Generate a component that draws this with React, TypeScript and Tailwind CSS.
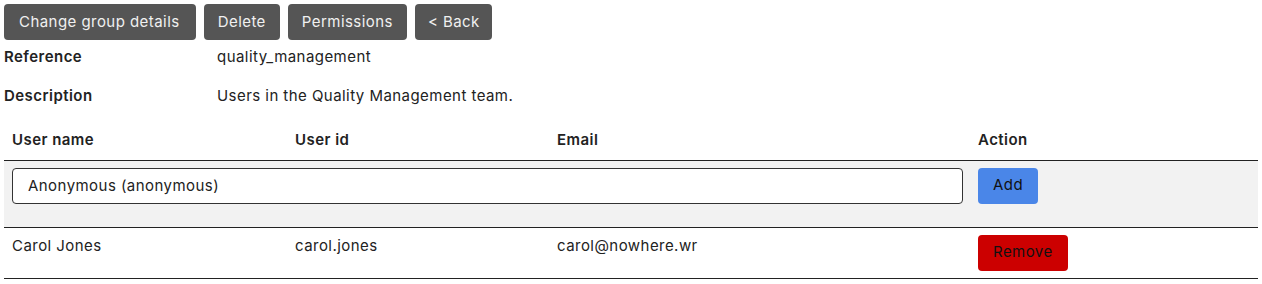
import React from "react";

const font = { fontFamily: "Inter, 'Noto Sans', sans-serif" };

export default function App() {
  return (
    <div className="px-[4px] pt-[4px] text-[15px] tracking-[0.45px] text-[#222]" style={font}>
      <div className="flex gap-[8px]">
        <button className="h-[36px] pl-[15px] pr-[16px] rounded-[4px] bg-[#555555] text-[#f0f0f0]">Change group details</button>
        <button className="h-[36px] px-[14px] rounded-[4px] bg-[#555555] text-[#f0f0f0]">Delete</button>
        <button className="h-[36px] px-[14px] rounded-[4px] bg-[#555555] text-[#f0f0f0]">Permissions</button>
        <button className="h-[36px] pl-[13px] pr-[12px] rounded-[4px] bg-[#555555] text-[#f0f0f0]">&lt; Back</button>
      </div>
      <div className="grid grid-cols-[213px_1fr] gap-y-[5px]">
        <div className="h-[34px] flex items-center font-semibold">Reference</div>
        <div className="h-[34px] flex items-center">quality_management</div>
        <div className="h-[34px] flex items-center font-semibold">Description</div>
        <div className="h-[34px] flex items-center">Users in the Quality Management team.</div>
      </div>
      <table className="mt-[7px] w-[1254px] border-collapse table-fixed">
        <colgroup>
          <col className="w-[283px]" />
          <col className="w-[262px]" />
          <col className="w-[421px]" />
          <col className="w-[288px]" />
        </colgroup>
        <thead>
          <tr className="h-[40px] border-b border-[#222]">
            <th className="px-[8px] text-left font-semibold">User name</th>
            <th className="px-[8px] text-left font-semibold">User id</th>
            <th className="px-[8px] text-left font-semibold">Email</th>
            <th className="px-[8px] text-left font-semibold">Action</th>
          </tr>
        </thead>
        <tbody>
          <tr className="bg-[#f2f2f2] border-b border-[#222]">
            <td colSpan={3} className="pl-[8px] pr-[7px] pt-[7px] pb-[23px] align-top">
              <input
                readOnly
                value="Anonymous (anonymous)"
                className="w-full h-[36px] rounded-[4px] border border-[#333] bg-white px-[15px] text-[15px] tracking-[0.45px] text-[#222] outline-none"
                style={font}
              />
            </td>
            <td className="px-[8px] pt-[7px] pb-[23px] align-top">
              <button className="h-[36px] px-[15px] rounded-[4px] bg-[#4a86e8] text-[#111]">Add</button>
            </td>
          </tr>
          <tr className="border-b border-[#222]">
            <td className="px-[8px] pt-[7px] pb-[13px] align-top"><div className="h-[22px]">Carol Jones</div></td>
            <td className="px-[8px] pt-[7px] pb-[13px] align-top"><div className="h-[22px]">carol.jones</div></td>
            <td className="px-[8px] pt-[7px] pb-[13px] align-top"><div className="h-[22px]">carol@nowhere.wr</div></td>
            <td className="px-[8px] py-[7px] align-top">
              <button className="h-[36px] px-[15px] rounded-[4px] bg-[#cc0000] text-[#111]">Remove</button>
            </td>
          </tr>
        </tbody>
      </table>
    </div>
  );
}
